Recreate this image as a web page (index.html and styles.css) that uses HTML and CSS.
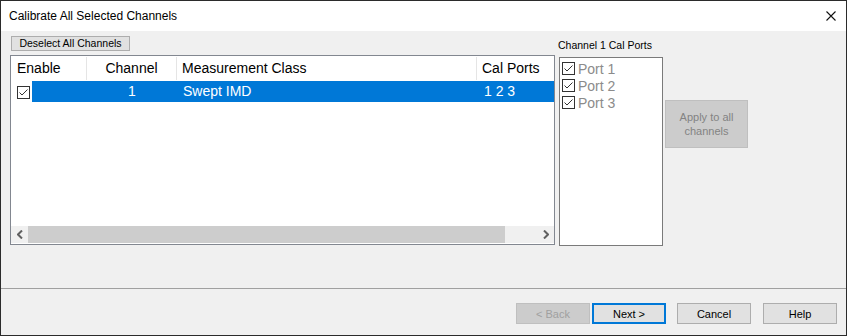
FILE: index.html
```html
<!DOCTYPE html>
<html lang="en">
<head>
    <meta charset="UTF-8">
    <title>Calibrate All Selected Channels</title>
    <link rel="stylesheet" href="styles.css">
</head>
<body>

<div class="window">
    <div class="titlebar">
        <span class="title">Calibrate All Selected Channels</span>
        <svg class="close" width="10" height="10" viewBox="0 0 10 10">
            <path d="M0.5 0.5 L9.5 9.5 M9.5 0.5 L0.5 9.5" stroke="#111" stroke-width="1.1" fill="none"/>
        </svg>
    </div>

    <div class="content">
        <div class="main-col">
            <button class="btn btn-deselect">Deselect All Channels</button>
            <div class="listview">
                <div class="lv-header">
                    <div class="hcell c-enable">Enable</div>
                    <div class="hcell c-channel">Channel</div>
                    <div class="hcell c-class">Measurement Class</div>
                    <div class="hcell c-ports">Cal Ports</div>
                </div>
                <div class="lv-body">
                    <div class="lv-row">
                        <div class="check-cell">
                            <svg class="checkbox" width="13" height="13" viewBox="0 0 13 13">
                                <rect x="0.5" y="0.5" width="12" height="12" fill="#fff" stroke="#333"/>
                                <path d="M2.5 6.5 L5 9 L10.5 3.5" stroke="#333" stroke-width="1" fill="none"/>
                            </svg>
                        </div>
                        <div class="sel">
                            <div class="r-spacer"></div>
                            <div class="r-channel">1</div>
                            <div class="r-class">Swept IMD</div>
                            <div class="r-ports">1 2 3</div>
                        </div>
                    </div>
                </div>
                <div class="hscroll">
                    <div class="arrow">
                        <svg width="6" height="9" viewBox="0 0 6 9"><path d="M5 0.5 L1 4.5 L5 8.5" stroke="#606060" stroke-width="2" fill="none"/></svg>
                    </div>
                    <div class="thumb"></div>
                    <div class="track"></div>
                    <div class="arrow">
                        <svg width="6" height="9" viewBox="0 0 6 9"><path d="M1 0.5 L5 4.5 L1 8.5" stroke="#606060" stroke-width="2" fill="none"/></svg>
                    </div>
                </div>
            </div>
        </div>

        <div class="ports-col">
            <div class="ports-label">Channel 1 Cal Ports</div>
            <div class="ports-box">
                <div class="port">
                    <svg width="13" height="13" viewBox="0 0 13 13"><rect x="0.5" y="0.5" width="12" height="12" fill="#fff" stroke="#333"/><path d="M2.5 6.5 L5 9 L10.5 3.5" stroke="#333" fill="none"/></svg>
                    <span>Port 1</span>
                </div>
                <div class="port">
                    <svg width="13" height="13" viewBox="0 0 13 13"><rect x="0.5" y="0.5" width="12" height="12" fill="#fff" stroke="#333"/><path d="M2.5 6.5 L5 9 L10.5 3.5" stroke="#333" fill="none"/></svg>
                    <span>Port 2</span>
                </div>
                <div class="port">
                    <svg width="13" height="13" viewBox="0 0 13 13"><rect x="0.5" y="0.5" width="12" height="12" fill="#fff" stroke="#333"/><path d="M2.5 6.5 L5 9 L10.5 3.5" stroke="#333" fill="none"/></svg>
                    <span>Port 3</span>
                </div>
            </div>
        </div>

        <button class="btn btn-apply" disabled>Apply to all<br>channels</button>
    </div>

    <div class="footer">
        <button class="btn btn-foot disabled">&lt; Back</button>
        <button class="btn btn-foot default">Next &gt;</button>
        <button class="btn btn-foot cancel">Cancel</button>
        <button class="btn btn-foot help">Help</button>
    </div>
</div>

</body>
</html>
```

FILE: styles.css
```css
body {
    margin: 0;
    font-family: "Liberation Sans", Arial, sans-serif;
    background: #f0f0f0;
}

.window {
    width: 847px;
    height: 336px;
    box-sizing: border-box;
    border: 1px solid #2b2b2b;
    background: #f0f0f0;
    display: flex;
    flex-direction: column;
}

.titlebar {
    height: 30px;
    flex: none;
    background: #fff;
    display: flex;
    align-items: center;
    justify-content: space-between;
    padding: 0 10px 0 8px;
}

.title {
    font-size: 12px;
    color: #000;
}

.content {
    height: 257px;
    flex: none;
    box-sizing: border-box;
    padding: 5px 0 0 9px;
    display: flex;
    align-items: flex-start;
}

.btn {
    font-family: "Liberation Sans", Arial, sans-serif;
    background: #e1e1e1;
    border: 1px solid #adadad;
    color: #000;
    padding: 0;
    margin: 0;
    box-sizing: border-box;
}

.btn-deselect {
    display: block;
    width: 119px;
    height: 15px;
    margin-left: 1px;
    font-size: 10.5px;
    line-height: 13px;
}

.listview {
    margin-top: 4px;
    width: 545px;
    height: 190px;
    box-sizing: border-box;
    border: 1px solid #828790;
    background: #fff;
    display: flex;
    flex-direction: column;
    font-size: 14px;
}

.lv-header {
    height: 25px;
    flex: none;
    display: flex;
}

.hcell {
    box-sizing: border-box;
    line-height: 25px;
    border-right: 1px solid #e5e5e5;
    margin: 1px 0 1px 0;
    line-height: 23px;
}

.c-enable {
    width: 76px;
    padding-left: 6px;
}

.c-channel {
    width: 90px;
    text-align: center;
}

.c-class {
    width: 300px;
    padding-left: 5px;
}

.c-ports {
    flex: 1;
    padding-left: 5px;
    border-right: none;
}

.lv-body {
    flex: 1;
}

.lv-row {
    height: 21px;
    display: flex;
}

.check-cell {
    width: 21px;
    padding-left: 6px;
    box-sizing: border-box;
    display: flex;
    align-items: center;
}

.checkbox {
    display: block;
    margin-top: 1px;
}

.sel {
    flex: 1;
    background: #0078d7;
    color: #fff;
    display: flex;
    line-height: 21px;
}

.r-spacer {
    width: 55px;
}

.r-channel {
    width: 90px;
    text-align: center;
}

.r-class {
    width: 300px;
    padding-left: 6px;
    box-sizing: border-box;
}

.r-ports {
    padding-left: 7px;
}

.hscroll {
    height: 17px;
    flex: none;
    display: flex;
    background: #f0f0f0;
    margin-bottom: 1px;
}

.arrow {
    width: 17px;
    display: flex;
    align-items: center;
    justify-content: center;
}

.thumb {
    width: 477px;
    background: #cdcdcd;
}

.track {
    flex: 1;
}

.ports-col {
    margin-left: 4px;
}

.ports-label {
    font-size: 10.5px;
    line-height: 13px;
    padding-top: 3px;
    margin: 0 0 5px -1px;
}

.ports-box {
    width: 104px;
    height: 189px;
    box-sizing: border-box;
    border: 1px solid #7a7a7a;
    background: #fff;
    padding: 2px 0 0 2px;
}

.port {
    height: 17px;
    display: flex;
    align-items: center;
    gap: 3px;
    font-size: 14px;
    color: #8b8b8b;
}

.port svg {
    display: block;
}

.btn-apply {
    margin: 64px 0 0 2px;
    width: 83px;
    height: 48px;
    background: #cccccc;
    border-color: #bfbfbf;
    color: #838383;
    font-size: 11px;
    line-height: 14px;
}

.footer {
    flex: 1;
    border-top: 1px solid #a0a0a0;
    display: flex;
    justify-content: flex-end;
    align-items: flex-start;
    padding: 14px 9px 0 0;
}

.btn-foot {
    width: 74px;
    height: 21px;
    font-size: 11px;
}

.btn-foot.disabled {
    background: #cccccc;
    border-color: #bfbfbf;
    color: #a0a0a0;
}

.btn-foot.default {
    margin-left: 2px;
    border: 2px solid #0078d7;
}

.btn-foot.cancel {
    margin-left: 11px;
}

.btn-foot.help {
    margin-left: 12px;
}
```
